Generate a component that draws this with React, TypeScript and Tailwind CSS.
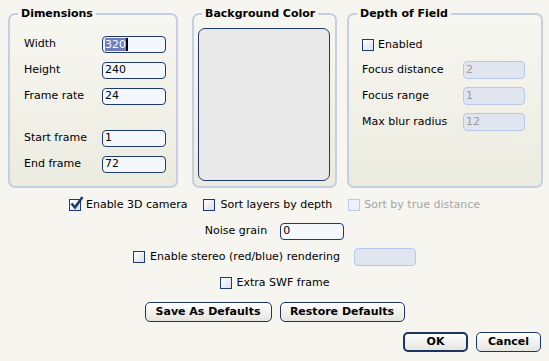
import React from "react";

function Box({ checked = false, disabled = false }: { checked?: boolean; disabled?: boolean }) {
  return (
    <span className="relative inline-block w-[12px] h-[12px] shrink-0">
      <span
        className={
          disabled
            ? "absolute inset-0 border border-[#bccbe4] bg-[#eef1f7]"
            : "absolute inset-0 border border-[#1f3a6e] bg-gradient-to-br from-[#ffffff] to-[#d9dfea]"
        }
      />
      {checked && (
        <svg className="absolute left-[1px] top-[-3px]" width="14" height="14" viewBox="0 0 14 14">
          <path d="M1.5 7.5 L5 11.5 L12.5 1" fill="none" stroke="#1f3a6e" strokeWidth="2.6" />
        </svg>
      )}
    </span>
  );
}

function Field({ value, w, selected = false }: { value: string; w: string; selected?: boolean }) {
  return (
    <div className={`${w} h-[17px] flex items-center px-[2px] rounded-[4px] border border-[#1f3a6e] bg-[#f4f8fd]`}>
      {selected ? (
        <>
          <span className="bg-[#6f7dbf] text-white leading-[13px]">{value}</span>
          <span className="w-[2px] h-[13px] bg-black" />
        </>
      ) : (
        <span>{value}</span>
      )}
    </div>
  );
}

function OffField({ value, w }: { value: string; w: string }) {
  return (
    <div className={`${w} h-[18px] flex items-center px-[2px] rounded-[4px] border border-[#b6c8e8] bg-[#e1e5f0] text-[#9c9c9c]`}>
      {value}
    </div>
  );
}

function Button({ label, w, strong = false }: { label: string; w: string; strong?: boolean }) {
  return (
    <button
      className={`${w} h-[20px] rounded-[5px] ${strong ? "border-2" : "border"} border-[#1d3564] bg-gradient-to-b from-[#ffffff] to-[#e4e4e0] font-bold text-[11px] flex items-center justify-center`}
    >
      {label}
    </button>
  );
}

function Panel({ title, className, children }: { title: string; className: string; children: React.ReactNode }) {
  return (
    <div
      className={`relative h-[175px] border-2 border-[#c5cfe2] rounded-[7px] bg-gradient-to-b from-[#f7f7f2] to-[#ecebdf] ${className}`}
    >
      <span className="absolute left-[8px] top-[-8px] px-[3px] bg-[#f6f5ef] font-bold leading-[14px]">
        {title}
      </span>
      {children}
    </div>
  );
}

export default function App() {
  return (
    <div className="w-[549px] h-[361px] bg-[#f6f5ef] text-black text-[11px] font-['DejaVu_Sans',sans-serif] overflow-hidden">
      <div className="flex pt-[13px]">
        <Panel title="Dimensions" className="ml-[8px] w-[170px] pl-[14px] pt-[21px]">
          <div className="flex flex-col gap-[10px]">
            {[
              ["Width", "320"],
              ["Height", "240"],
              ["Frame rate", "24"],
            ].map(([l, v]) => (
              <div key={l} className="flex items-center h-[16px]">
                <span className="w-[78px]">{l}</span>
                <Field value={v} w="w-[64px]" selected={l === "Width"} />
              </div>
            ))}
            <div className="flex items-center h-[16px] mt-[16px]">
              <span className="w-[78px]">Start frame</span>
              <Field value="1" w="w-[64px]" />
            </div>
            <div className="flex items-center h-[16px]">
              <span className="w-[78px]">End frame</span>
              <Field value="72" w="w-[64px]" />
            </div>
          </div>
        </Panel>

        <Panel title="Background Color" className="ml-[14px] w-[145px] pl-[4px] pt-[13px]">
          <div className="w-[132px] h-[153px] rounded-[7px] border border-[#1f3a70] bg-[#e9e9e9]" />
        </Panel>

        <Panel title="Depth of Field" className="ml-[10px] w-[196px] pl-[13px] pt-[24px]">
          <div className="flex items-center gap-[4px] h-[12px]">
            <Box />
            <span>Enabled</span>
          </div>
          <div className="flex flex-col gap-[8px] mt-[10px]">
            {[
              ["Focus distance", "2"],
              ["Focus range", "1"],
              ["Max blur radius", "12"],
            ].map(([l, v]) => (
              <div key={l} className="flex items-center h-[18px]">
                <span className="w-[101px]">{l}</span>
                <OffField value={v} w="w-[62px]" />
              </div>
            ))}
          </div>
        </Panel>
      </div>

      <div className="flex flex-col mt-[4px]">
        <div className="h-[26px] flex items-center justify-center">
          <label className="flex items-center gap-[5px]">
            <Box checked />
            <span>Enable 3D camera</span>
          </label>
          <label className="flex items-center gap-[5px] ml-[16px]">
            <Box />
            <span>Sort layers by depth</span>
          </label>
          <label className="flex items-center gap-[4px] ml-[16px] text-[#a6a6a6]">
            <Box disabled />
            <span>Sort by true distance</span>
          </label>
        </div>
        <div className="h-[26px] flex items-center justify-center">
          <span>Noise grain</span>
          <div className="ml-[13px]">
            <Field value="0" w="w-[64px]" />
          </div>
        </div>
        <div className="h-[26px] flex items-center justify-center">
          <label className="flex items-center gap-[5px]">
            <Box />
            <span>Enable stereo (red/blue) rendering</span>
          </label>
          <div className="ml-[14px] w-[62px] h-[18px] rounded-[4px] border border-[#b6c8e8] bg-[#e1e5f0]" />
        </div>
        <div className="h-[26px] flex items-center justify-center">
          <label className="flex items-center gap-[5px]">
            <Box />
            <span>Extra SWF frame</span>
          </label>
        </div>
        <div className="flex justify-center gap-[8px] mt-[6px]">
          <Button label="Save As Defaults" w="w-[127px]" />
          <Button label="Restore Defaults" w="w-[125px]" />
        </div>
        <div className="flex justify-end gap-[8px] mt-[10px] pr-[8px]">
          <Button label="OK" w="w-[65px]" strong />
          <Button label="Cancel" w="w-[65px]" />
        </div>
      </div>
    </div>
  );
}
